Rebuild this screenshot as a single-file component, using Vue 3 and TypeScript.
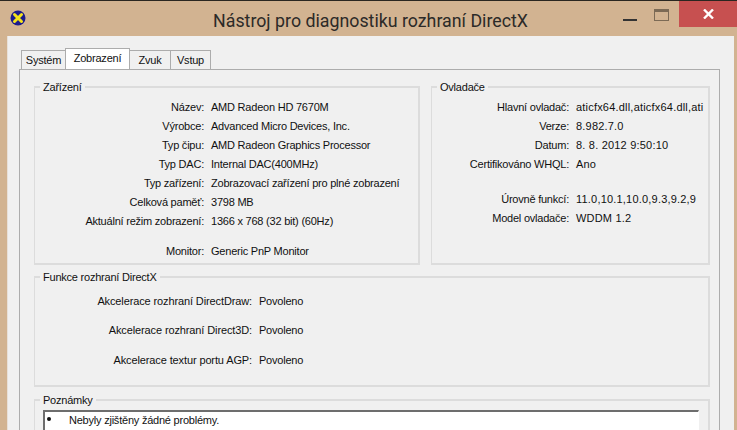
<script setup lang="ts">
const device: [string, string][] = [
  ['Název:', 'AMD Radeon HD 7670M'],
  ['Výrobce:', 'Advanced Micro Devices, Inc.'],
  ['Typ čipu:', 'AMD Radeon Graphics Processor'],
  ['Typ DAC:', 'Internal DAC(400MHz)'],
  ['Typ zařízení:', 'Zobrazovací zařízení pro plné zobrazení'],
  ['Celková paměť:', '3798 MB'],
  ['Aktuální režim zobrazení:', '1366 x 768 (32 bit) (60Hz)'],
]
const driver: [string, string][] = [
  ['Hlavní ovladač:', 'aticfx64.dll,aticfx64.dll,ati'],
  ['Verze:', '8.982.7.0'],
  ['Datum:', '8. 8. 2012 9:50:10'],
  ['Certifikováno WHQL:', 'Ano'],
]
const driver2: [string, string][] = [
  ['Úrovně funkcí:', '11.0,10.1,10.0,9.3,9.2,9'],
  ['Model ovladače:', 'WDDM 1.2'],
]
const features: [string, string][] = [
  ['Akcelerace rozhraní DirectDraw:', 'Povoleno'],
  ['Akcelerace rozhraní Direct3D:', 'Povoleno'],
  ['Akcelerace textur portu AGP:', 'Povoleno'],
]
</script>

<template>
  <div class="window">
    <header class="titlebar">
      <svg class="appicon" width="16" height="16" viewBox="0 0 16 16">
        <circle cx="8" cy="8" r="7.5" fill="#1c1c8c" />
        <path d="M4.5 4.5 11.5 11.5M11.5 4.5 4.5 11.5" stroke="#f4e21c" stroke-width="3" stroke-linecap="round" />
      </svg>
      <h1 class="title">Nástroj pro diagnostiku rozhraní DirectX</h1>
      <div class="controls">
        <span class="min"></span>
        <span class="max"></span>
        <span class="close">
          <svg width="11" height="10" viewBox="0 0 11 10"><path d="M1 0.5 10 9.5M10 0.5 1 9.5" stroke="#fff" stroke-width="2.4" /></svg>
        </span>
      </div>
    </header>
    <main class="client">
      <nav class="tabs">
        <span class="tab t1">Systém</span>
        <span class="tab active">Zobrazení</span>
        <span class="tab t3">Zvuk</span>
        <span class="tab t4">Vstup</span>
      </nav>
      <section class="panel">
        <div class="top">
          <fieldset class="group dev">
            <legend>Zařízení</legend>
            <div v-for="r in device" :key="r[0]" class="row">
              <span class="k">{{ r[0] }}</span><span class="v">{{ r[1] }}</span>
            </div>
            <div class="row mon">
              <span class="k">Monitor:</span><span class="v">Generic PnP Monitor</span>
            </div>
          </fieldset>
          <fieldset class="group drv">
            <legend>Ovladače</legend>
            <div v-for="r in driver" :key="r[0]" class="row">
              <span class="k">{{ r[0] }}</span><span class="v">{{ r[1] }}</span>
            </div>
            <div class="spacer"></div>
            <div v-for="r in driver2" :key="r[0]" class="row">
              <span class="k">{{ r[0] }}</span><span class="v">{{ r[1] }}</span>
            </div>
          </fieldset>
        </div>
        <fieldset class="group feat">
          <legend>Funkce rozhraní DirectX</legend>
          <div v-for="r in features" :key="r[0]" class="frow">
            <span class="k">{{ r[0] }}</span><span class="v">{{ r[1] }}</span>
          </div>
        </fieldset>
        <fieldset class="group notes">
          <legend>Poznámky</legend>
          <div class="box">
            <span class="bullet"></span><span>Nebyly zjištěny žádné problémy.</span>
          </div>
        </fieldset>
      </section>
    </main>
  </div>
</template>

<style>
html, body { margin: 0; padding: 0; overflow: hidden; }
</style>

<style scoped>
.window {
  width: 737px;
  height: 430px;
  overflow: hidden;
  background: #d2b391;
  border-top: 1px solid #2a2620;
  box-sizing: border-box;
  font-family: "Liberation Sans", Arial, sans-serif;
  font-size: 11px;
  letter-spacing: -0.22px;
  color: #111;
  padding-left: 7px;
  padding-right: 3px;
}
.titlebar {
  height: 35px;
  position: relative;
  display: flex;
  align-items: center;
  justify-content: center;
}
.appicon { position: absolute; left: 3px; top: 9px; }
.title {
  margin: 4px 0 0 0;
  font-weight: 400;
  font-size: 17.8px;
  letter-spacing: 0;
  color: #2c2a28;
  font-family: "Roboto", sans-serif;
}
.controls { position: absolute; right: -3px; top: 0; display: flex; }
.min { width: 14px; height: 2px; background: #333; margin: 18px 17px 0 0; }
.max {
  width: 13px; height: 8px; border: 1px solid #7c6a55; border-top-width: 3px;
  margin: 8px 10px 0 0;
}
.close {
  width: 58px; height: 26px; background: #c75050;
  display: flex; align-items: center; justify-content: center;
}
.client {
  height: 394px;
  background: #f0f0f0;
  padding: 12px 14px 0 11px;
  box-sizing: border-box;
  border-left: 1px solid #e8e0d8;
}
.tabs { display: flex; height: 21px; align-items: flex-end; padding-left: 2px; }
.tab {
  height: 19px;
  box-sizing: border-box;
  border: 1px solid #acacac;
  border-bottom: 0;
  background: #f0f0f0;
  display: flex;
  align-items: center;
  justify-content: center;
  margin-left: -1px;
}
.t1 { width: 45px; margin-left: 0; }
.t3 { width: 42px; }
.t4 { width: 41px; }
.active {
  width: 65px;
  height: 21px;
  background: #fff;
  position: relative;
  z-index: 1;
  padding-bottom: 3px;
}
.panel {
  border: 1px solid #acacac;
  background: #f0f0f0;
  height: 400px;
  padding: 10px 9px 0 14px;
  box-sizing: border-box;
}
.top { display: flex; gap: 11px; }
.group {
  margin: 0;
  padding: 0;
  min-width: 0;
  border: 1px solid #dcdcdc;
  border-width: 2px 2px 2px 1px;
  box-sizing: border-box;
}
legend { padding: 0 3px; margin-left: 5px; line-height: 14px; }
.dev { width: 386px; height: 185px; padding-top: 3px; }
.drv { width: 279px; height: 185px; padding-top: 3px; }
.row { display: flex; height: 19px; align-items: center; }
.k { text-align: right; flex: none; }
.dev .k { width: 169px; margin-right: 7px; }
.drv .k { width: 137px; margin-right: 7px; }
.v { white-space: nowrap; }
.drv .v { letter-spacing: 0.2px; }
.mon { margin-top: 11px; }
.spacer { height: 16px; }
.feat { height: 117px; margin-top: 5px; padding-top: 2px; }
.frow { display: flex; height: 29.5px; align-items: center; }
.feat .k { width: 217px; margin-right: 7px; letter-spacing: -0.12px; }
.notes { height: 60px; margin-top: 6px; padding: 0; }
.box {
  background: #fff;
  height: 40px;
  margin: 3px 9px 0 8px;
  border: 1px solid #fff;
  border-top: 2px solid #6d6d6d;
  border-left: 2px solid #6d6d6d;
  display: flex;
  align-items: flex-start;
  padding-left: 2px;
  line-height: 16px;
}
.bullet {
  width: 4px; height: 4px; background: #111; border-radius: 50%;
  margin: 5px 18px 0 0;
  flex: none;
}
</style>
